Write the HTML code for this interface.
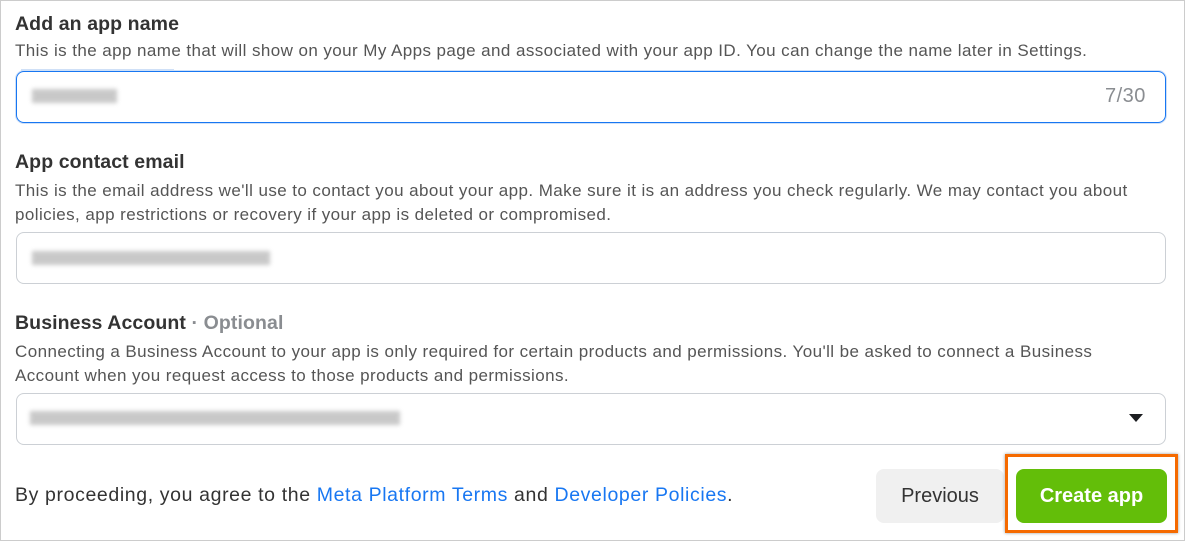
<!DOCTYPE html><html><head><style>
body{margin:0;width:1185px;height:541px;background:#fff;font-family:"Liberation Sans",Arial,sans-serif;position:relative;overflow:hidden}
.frame{position:absolute;left:0;top:0;width:1183px;height:539px;border:1px solid #ccc}
.a{position:absolute;white-space:nowrap}
.h{font-size:19.5px;font-weight:bold;color:#333;letter-spacing:0.1px}
.d{font-size:17px;color:#555;letter-spacing:0.42px}
.box{position:absolute;left:16px;width:1148px;height:50px;border:1px solid #ccd0d5;border-radius:8px}
.blur{position:absolute;height:14px;background:#bbb;filter:blur(2px);opacity:.8}
</style></head><body><div class="frame"></div>
<div class="a h" style="left:15px;top:13px">Add an app name</div>
<div class="a d" style="left:15px;top:41px">This is the app name that will show on your My Apps page and associated with your app ID. You can change the name later in Settings.</div>
<div style="position:absolute;left:21px;top:69px;width:153px;height:3px;background:#cfe0f7"></div>
<div class="box" style="top:71px;border-color:#1877f2;box-shadow:0 0 0 1px #cfe0f7"></div>
<div class="blur" style="left:32px;top:89px;width:85px"></div>
<div class="a" style="left:1105px;top:85px;font-size:20px;color:#8a8d91;letter-spacing:0.5px">7/30</div>
<div class="a h" style="left:15px;top:151px">App contact email</div>
<div class="a d" style="left:15px;top:179px;line-height:24px">This is the email address we'll use to contact you about your app. Make sure it is an address you check regularly. We may contact you about<br>policies, app restrictions or recovery if your app is deleted or compromised.</div>
<div class="box" style="top:232px"></div>
<div class="blur" style="left:32px;top:251px;width:238px"></div>
<div class="a h" style="left:15px;top:312px">Business Account <span style="color:#8a8d91">· Optional</span></div>
<div class="a d" style="left:15px;top:340px;line-height:24px">Connecting a Business Account to your app is only required for certain products and permissions. You'll be asked to connect a Business<br>Account when you request access to those products and permissions.</div>
<div class="box" style="top:393px"></div>
<div class="blur" style="left:30px;top:411px;width:370px"></div>
<div style="position:absolute;left:1129px;top:414px;width:0;height:0;border-left:7px solid transparent;border-right:7px solid transparent;border-top:8px solid #1c1e21"></div>
<div class="a" style="left:15px;top:484px;font-size:19.5px;color:#333;letter-spacing:0.62px">By proceeding, you agree to the <span style="color:#1877f2">Meta Platform Terms</span> and <span style="color:#1877f2">Developer Policies</span>.</div>
<div class="a" style="left:876px;top:469px;width:128px;height:54px;background:#f0f0f0;border-radius:8px;font-size:20px;color:#333;text-align:center;line-height:54px">Previous</div>
<div class="a" style="left:1005px;top:454px;width:167px;height:73px;border:3px solid #f56a00;box-shadow:0 0 3px #999"></div>
<div class="a" style="left:1016px;top:469px;width:151px;height:54px;background:#63be09;border-radius:8px;font-size:20px;font-weight:bold;color:#fff;text-align:center;line-height:54px">Create app</div>
</body></html>
